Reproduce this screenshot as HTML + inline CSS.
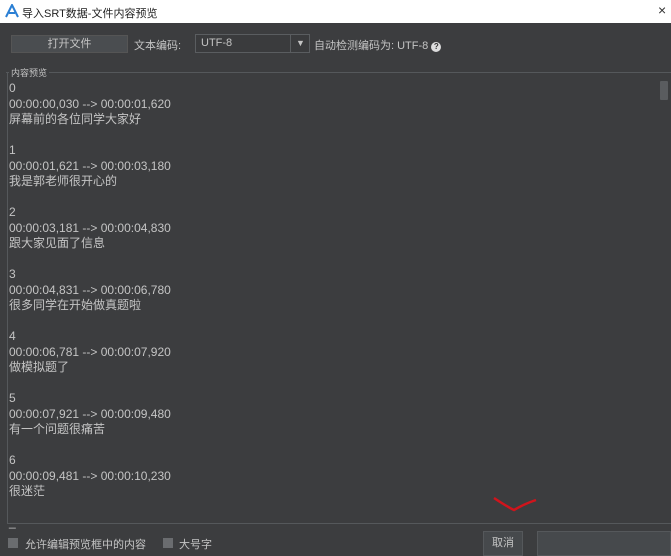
<!DOCTYPE html>
<html><head><meta charset="utf-8"><style>
*{margin:0;padding:0;box-sizing:border-box}
body{width:671px;height:556px;overflow:hidden;background:#3c3d3f;font-family:"Liberation Sans","Noto Sans CJK SC",sans-serif;color:#c4c4c4;position:relative;font-size:12px}
.abs{position:absolute}
.title{left:0;top:0;width:671px;height:23px;background:#fff;color:#222;font-size:11px}
.lines div{height:15.5px;line-height:15.5px;font-size:12px;white-space:nowrap}
</style></head><body>
<div class="abs title">
<svg class="abs" style="left:5px;top:4px" width="14" height="14" viewBox="0 0 14 14"><path d="M1 13 L7 1 L13 13 M4 9 L10 9" stroke="#2a7fd4" stroke-width="2" fill="none"/></svg>
<div class="abs" style="left:22px;top:5px">导入SRT数据-文件内容预览</div>
<div class="abs" style="left:658px;top:2px;font-size:14px;color:#333">×</div>
</div>
<div class="abs" style="left:11px;top:35px;width:117px;height:18px;background:#4a4d50;border:1px solid #555;text-align:center;line-height:16px;font-size:11px">打开文件</div>
<div class="abs" style="left:134px;top:37px;font-size:11px">文本编码:</div>
<div class="abs" style="left:195px;top:34px;width:115px;height:19px;border:1px solid #5a5d60;background:#3a3b3d;font-size:11px;line-height:17px;padding-left:5px">UTF-8<span class="abs" style="left:94px;top:0;width:1px;height:17px;background:#5a5d60"></span><span class="abs" style="left:100px;top:0;font-size:9px">▼</span></div>
<div class="abs" style="left:314px;top:37px;font-size:11px">自动检测编码为: UTF-8 <span style="display:inline-block;width:10px;height:10px;border-radius:5px;background:#ddd;color:#333;font-size:8px;text-align:center;line-height:10px;font-weight:bold">?</span></div>
<div class="abs" style="left:6px;top:72px;width:665px;height:1px;background:#55585b"></div>
<div class="abs" style="left:7px;top:72px;width:1px;height:452px;background:#55585b"></div>
<div class="abs" style="left:7px;top:523px;width:664px;height:1px;background:#55585b"></div>
<div class="abs" style="left:9px;top:66px;font-size:9px;background:#3c3d3f;padding:0 2px">内容预览</div>
<div class="abs" style="left:660px;top:81px;width:8px;height:19px;background:#5a5c5f;border-radius:1px"></div>
<div class="abs lines" style="left:9px;top:81px">
<div>0</div><div>00:00:00,030 --&gt; 00:00:01,620</div><div>屏幕前的各位同学大家好</div><div></div>
<div>1</div><div>00:00:01,621 --&gt; 00:00:03,180</div><div>我是郭老师很开心的</div><div></div>
<div>2</div><div>00:00:03,181 --&gt; 00:00:04,830</div><div>跟大家见面了信息</div><div></div>
<div>3</div><div>00:00:04,831 --&gt; 00:00:06,780</div><div>很多同学在开始做真题啦</div><div></div>
<div>4</div><div>00:00:06,781 --&gt; 00:00:07,920</div><div>做模拟题了</div><div></div>
<div>5</div><div>00:00:07,921 --&gt; 00:00:09,480</div><div>有一个问题很痛苦</div><div></div>
<div>6</div><div>00:00:09,481 --&gt; 00:00:10,230</div><div>很迷茫</div><div></div>
<div>_</div>
</div>
<svg class="abs" style="left:492px;top:494px" width="48" height="20"><path d="M2 4 Q14 12 22 16 Q32 10 44 6" stroke="#d0141c" stroke-width="2.5" fill="none"/></svg>
<div class="abs" style="left:8px;top:538px;width:10px;height:10px;background:#6a6c6f"></div>
<div class="abs" style="left:25px;top:536px;font-size:11px">允许编辑预览框中的内容</div>
<div class="abs" style="left:163px;top:538px;width:10px;height:10px;background:#6a6c6f"></div>
<div class="abs" style="left:179px;top:536px;font-size:11px">大号字</div>
<div class="abs" style="left:483px;top:531px;width:40px;height:25px;background:#46494c;border:1px solid #55585b;text-align:center;line-height:23px;font-size:11px">取消</div>
<div class="abs" style="left:537px;top:531px;width:134px;height:25px;background:#46494c;border:1px solid #55585b"></div>
</body></html>
